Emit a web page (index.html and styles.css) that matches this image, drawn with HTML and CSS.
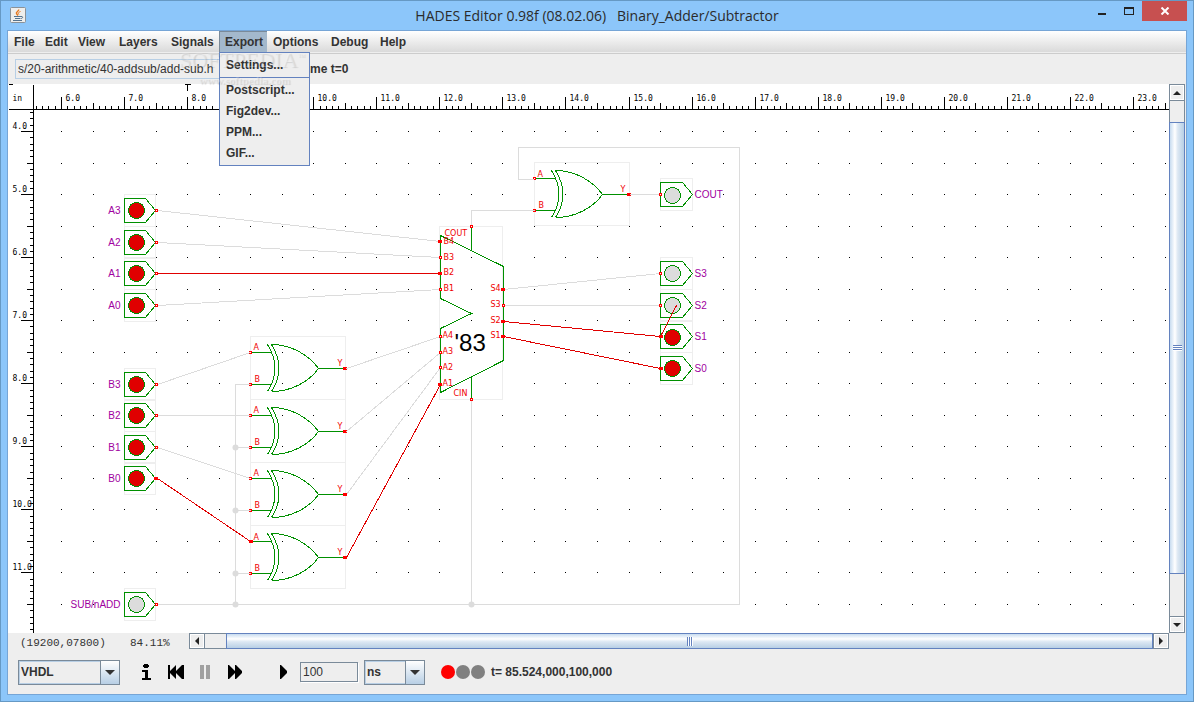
FILE: index.html
```html
<!DOCTYPE html>
<html lang="en">
<head>
<meta charset="utf-8">
<title>HADES Editor 0.98f (08.02.06) Binary_Adder/Subtractor</title>
<link rel="stylesheet" href="styles.css">
</head>
<body>
<div class="window">
  <header class="titlebar">
    <svg class="java-icon" width="16" height="16" viewBox="0 0 16 16" aria-hidden="true">
      <rect x="0.5" y="0.5" width="15" height="15" rx="1" fill="#eeeeec" stroke="#8a9299"/>
      <path d="M8.500 2.500C9.500 4 5.500 5 6.500 6.500L8 8.500" fill="none" stroke="#e8781e" stroke-width="1.500"/>
      <path d="M10.500 4.500C8 5.500 8 6 9 7.500" fill="none" stroke="#e8781e"/>
      <path d="M4 9.500H11M5 11.500H10.500M3 13.500H12M11 9.500C13.500 9 13 11.500 11 11.500" fill="none" stroke="#54738f"/>
    </svg>
    <h1 class="title">HADES Editor 0.98f (08.02.06) &nbsp; Binary_Adder/Subtractor</h1>
    <div class="window-buttons">
      <button class="win-btn" type="button" aria-label="Minimize"><svg width="10" height="10" viewBox="0 0 10 10"><path d="M1 8H9V10H1Z" fill="#222"/></svg></button>
      <button class="win-btn" type="button" aria-label="Maximize"><svg width="10" height="10" viewBox="0 0 10 10"><path d="M0 2H10V10H0ZM1 4V9H9V4Z" fill="#222" fill-rule="evenodd"/></svg></button>
      <button class="win-btn close" type="button" aria-label="Close"><svg width="10" height="8" viewBox="0 0 10 8"><path d="M1.500 0.500L8.500 7.500M8.500 0.500L1.500 7.500" stroke="#fff" stroke-width="2"/></svg></button>
    </div>
  </header>

  <main class="content">
    <nav class="menubar" aria-label="Main menu">
      <button type="button" class="menu">File</button>
      <button type="button" class="menu">Edit</button>
      <button type="button" class="menu">View</button>
      <button type="button" class="menu">Layers</button>
      <button type="button" class="menu">Signals</button>
      <div class="menu-holder">
        <button type="button" class="menu open" aria-expanded="true">Export</button>
        <div class="dropdown" role="menu">
          <button type="button" role="menuitem" class="item first">Settings...</button>
          <button type="button" role="menuitem" class="item">Postscript...</button>
          <button type="button" role="menuitem" class="item">Fig2dev...</button>
          <button type="button" role="menuitem" class="item">PPM...</button>
          <button type="button" role="menuitem" class="item">GIF...</button>
        </div>
      </div>
      <button type="button" class="menu">Options</button>
      <button type="button" class="menu">Debug</button>
      <button type="button" class="menu">Help</button>
      <div class="watermark"><span class="wm-name">SOFTPEDIA<sup class="wm-tm">™</sup></span><span class="wm-url">www.softpedia.com</span></div>
    </nav>

    <div class="toolbar">
      <input class="path" type="text" aria-label="Design path" value="s/20-arithmetic/40-addsub/add-sub.h">
      <span>me t=0</span>
    </div>

    <div class="editor">
      <svg class="canvas" id="canvas" role="img" aria-label="Binary adder and subtractor schematic">
        <defs>
          <g id="bulb-in">
            <rect class="bbox" x="124" y="-16" width="31" height="32"/>
            <path class="green" d="M124 -12H145L155 0L145 12H124Z"/>
          </g>
          <g id="bulb-out">
            <rect class="bbox" x="660" y="-16" width="32" height="32"/>
            <path class="green" d="M660 -12H682L692 0L682 12H660Z"/>
          </g>
          <rect id="port" class="port" x="-1" y="-1" width="2" height="2"/>
          <rect id="portf" class="port full" x="-2" y="-1" width="3" height="2"/>
          <g id="xor">
            <rect class="bbox" x="250" y="-32" width="95" height="63"/>
            <path class="green" d="M251 -16H271M251 16H271M267 -24Q282 0 267 23M271 -24Q286 0 271 23M271 -24C290 -24 308 -14 318 0C308 14 290 23 271 23M318 0H345"/>
            <use href="#port" x="250" y="-16"/><use href="#port" x="250" y="16"/><use href="#portf" x="345" y="0"/>
          </g>
        </defs>
        <g transform="translate(-7.500 -83.500)">
          <g id="grid"></g>
          <g id="ruler"></g>

          <g>
            <use href="#bulb-in" y="210"/><use href="#bulb-in" y="242"/><use href="#bulb-in" y="273"/><use href="#bulb-in" y="305"/>
            <use href="#bulb-in" y="384"/><use href="#bulb-in" y="415"/><use href="#bulb-in" y="447"/><use href="#bulb-in" y="478"/><use href="#bulb-in" y="604"/>
            <use href="#bulb-out" y="194"/><use href="#bulb-out" y="273"/><use href="#bulb-out" y="305"/><use href="#bulb-out" y="336"/><use href="#bulb-out" y="368"/>
          </g>
          <g class="on">
            <circle cx="136" cy="210" r="8"/><circle cx="136" cy="242" r="8"/><circle cx="136" cy="273" r="8"/><circle cx="136" cy="305" r="8"/>
            <circle cx="136" cy="384" r="8"/><circle cx="136" cy="415" r="8"/><circle cx="136" cy="447" r="8"/><circle cx="136" cy="478" r="8"/>
            <circle cx="672" cy="337" r="8"/><circle cx="672" cy="368" r="8"/>
          </g>
          <g class="off">
            <circle cx="136" cy="604" r="8"/><circle cx="672" cy="195" r="8"/><circle cx="672" cy="273" r="8"/><circle cx="672" cy="305" r="8"/>
          </g>

          <use href="#xor" y="368"/><use href="#xor" y="431"/><use href="#xor" y="494"/><use href="#xor" y="557"/>
          <use href="#xor" x="284" y="194"/>

          <rect class="bbox" x="439" y="226" width="63" height="173"/>
          <path class="green" d="M440 235L503 266V360L440 392V328L471 313L440 298ZM471 226V250M471 376V399"/>

          <g class="wire">
            <path d="M157 210L440 241M157 242L440 257M157 305L440 289M157 384L250 352M157 415H250M157 447L250 478"/>
            <path d="M346 368L440 336M346 431L440 352M346 494L440 367"/>
            <path d="M157 604H739V147H518V179H533M235 604V384H250M235 447H250M235 510H250M235 573H250M471 399V604"/>
            <path d="M471 226V210H534M629 194H660M503 289L660 273M503 305H660"/>
          </g>
          <g class="node">
            <circle cx="235" cy="447" r="3"/><circle cx="235" cy="510" r="3"/><circle cx="235" cy="573" r="3"/><circle cx="235" cy="604" r="3"/><circle cx="471" cy="604" r="3"/>
          </g>
          <path class="wire-on" d="M157 273H440M157 478L250 541M346 557L440 384M503 321L660 336L676 305M503 336L660 368"/>

          <g>
            <use href="#port" x="156" y="210"/><use href="#port" x="156" y="242"/><use href="#port" x="156" y="273"/><use href="#port" x="156" y="305"/>
            <use href="#port" x="156" y="384"/><use href="#port" x="156" y="415"/><use href="#port" x="156" y="447"/><use href="#portf" x="156" y="478"/><use href="#port" x="156" y="604"/>
            <use href="#port" x="660" y="194"/><use href="#port" x="660" y="273"/><use href="#port" x="660" y="305"/><use href="#portf" x="661" y="336"/><use href="#portf" x="661" y="368"/>
            <use href="#portf" x="440" y="241"/><use href="#port" x="440" y="257"/><use href="#portf" x="440" y="273"/><use href="#port" x="440" y="289"/>
            <use href="#port" x="440" y="336"/><use href="#port" x="440" y="352"/><use href="#port" x="440" y="367"/><use href="#portf" x="440" y="384"/>
            <use href="#portf" x="503" y="289"/><use href="#port" x="503" y="305"/><use href="#portf" x="503" y="321"/><use href="#portf" x="503" y="336"/>
            <use href="#port" x="471" y="226"/><use href="#port" x="471" y="399"/><use href="#portf" x="251" y="541"/>
          </g>

          <g class="name end">
            <text x="120" y="213">A3</text><text x="120" y="245">A2</text><text x="120" y="276">A1</text><text x="120" y="308">A0</text>
            <text x="120" y="387">B3</text><text x="120" y="418">B2</text><text x="120" y="450">B1</text><text x="120" y="481">B0</text>
            <text x="120" y="607">SUB/nADD</text>
          </g>
          <g class="name">
            <text x="694" y="197">COUT</text><text x="694" y="276">S3</text><text x="694" y="308">S2</text><text x="694" y="339">S1</text><text x="694" y="371">S0</text>
          </g>
          <g class="pin">
            <text x="253" y="349">A</text><text x="254" y="381">B</text><text x="337" y="365">Y</text>
            <text x="253" y="412">A</text><text x="254" y="444">B</text><text x="337" y="428">Y</text>
            <text x="253" y="475">A</text><text x="254" y="507">B</text><text x="337" y="491">Y</text>
            <text x="253" y="539">A</text><text x="254" y="570">B</text><text x="337" y="554">Y</text>
            <text x="537" y="176">A</text><text x="538" y="207">B</text><text x="620" y="191">Y</text>
            <text x="444" y="235">COUT</text><text x="453" y="395">CIN</text>
            <text x="443" y="243">B4</text><text x="443" y="259">B3</text><text x="443" y="274">B2</text><text x="443" y="290">B1</text>
            <text x="442" y="337">A4</text><text x="442" y="353">A3</text><text x="442" y="369">A2</text><text x="442" y="385">A1</text>
            <text x="490" y="290">S4</text><text x="490" y="306">S3</text><text x="490" y="322">S2</text><text x="490" y="337">S1</text>
          </g>
          <text class="chip" x="454" y="350">'83</text>
        </g>
      </svg>
      <div class="scroll vertical">
        <button type="button" class="sb-btn" aria-label="Scroll up"><svg width="8" height="4" viewBox="0 0 8 4"><path d="M4 0L8 4H0Z"/></svg></button>
        <div class="track"><div class="gap-before"></div><div class="thumb"><span class="grip"></span></div><div class="gap-after"></div></div>
        <button type="button" class="sb-btn" aria-label="Scroll down"><svg width="8" height="4" viewBox="0 0 8 4"><path d="M0 0H8L4 4Z"/></svg></button>
      </div>
    </div>

    <div class="status">
      <span class="coords">(19200,07800)</span>
      <span class="zoom">84.11%</span>
      <div class="scroll horizontal">
        <button type="button" class="sb-btn" aria-label="Scroll left"><svg width="4" height="8" viewBox="0 0 4 8"><path d="M4 0V8L0 4Z"/></svg></button>
        <div class="track"><div class="gap-before"></div><div class="thumb"><span class="grip"></span></div></div>
        <button type="button" class="sb-btn" aria-label="Scroll right"><svg width="4" height="8" viewBox="0 0 4 8"><path d="M0 0L4 4L0 8Z"/></svg></button>
      </div>
    </div>

    <div class="controls">
      <div class="combo language">
        <select aria-label="Language"><option>VHDL</option></select>
        <span class="arrow"><svg width="10" height="5" viewBox="0 0 10 5"><path d="M0 0H10L5 5Z"/></svg></span>
      </div>
      <div class="player">
        <button type="button" aria-label="Info"><svg width="16" height="16" viewBox="0 0 16 16"><path d="M6 0H10V1H11V3H10V4H6V3H5V1H6ZM4 6H10V14H13V16H4V14H7V8H4Z"/></svg></button>
        <button type="button" aria-label="Rewind"><svg width="16" height="16" viewBox="0 0 16 16"><path d="M0 1H2V7L8 1V7L14 1H16V15H14L8 9V15L2 9V15H0Z"/></svg></button>
        <button type="button" aria-label="Pause" disabled><svg width="16" height="16" viewBox="0 0 16 16"><path d="M2 1H6V15H2ZM8 1H12V15H8Z"/></svg></button>
        <button type="button" aria-label="Run"><svg width="16" height="16" viewBox="0 0 16 16"><path d="M0 1H1L7 7V1H8L14 7V9L8 15H7V9L1 15H0Z"/></svg></button>
      </div>
      <button type="button" class="step" aria-label="Step"><svg width="8" height="14" viewBox="0 0 8 14"><path d="M0 0H1L7 6V8L1 14H0Z"/></svg></button>
      <input class="amount" type="text" aria-label="Step time" value="100">
      <div class="combo unit">
        <select aria-label="Time unit"><option>ns</option></select>
        <span class="arrow"><svg width="10" height="5" viewBox="0 0 10 5"><path d="M0 0H10L5 5Z"/></svg></span>
      </div>
      <svg class="lamps" width="44" height="14" viewBox="0 0 44 14" aria-hidden="true"><circle cx="7" cy="7" r="7" fill="#f00"/><circle cx="22" cy="7" r="7" fill="#808080"/><circle cx="37" cy="7" r="7" fill="#808080"/></svg>
      <output class="time">t= 85.524,000,100,000</output>
    </div>
  </main>
</div>
<script src="ruler.js"></script>
</body>
</html>
```
FILE: styles.css
```css
* { box-sizing: border-box; }
body { margin: 0; font: bold 12px/16px "Liberation Sans", Arial, sans-serif; color: #333; }
button { border: 0; padding: 0; margin: 0; background: none; font: inherit; color: inherit; }
input, select { font: inherit; color: inherit; margin: 0; border-radius: 0; }
svg { display: block; }

.window {
  display: flex; flex-direction: column; height: 100vh; padding: 0 6px 6px;
  background: #8cc6fa; border: 1px solid #6699c4;
}
.titlebar { display: grid; grid-template-columns: 1fr auto 1fr; height: 29px; flex: none; }
.java-icon { margin: 6px 0 0 3px; }
.title { margin: 0; font: 14px/30px "Open Sans", "Noto Sans", sans-serif; color: #2b2b2b; white-space: nowrap; }
.window-buttons { display: flex; justify-content: flex-end; align-items: flex-start; }
.win-btn { width: 27px; height: 20px; padding-top: 4px; display: flex; justify-content: center; }
.win-btn.close { width: 45px; padding: 0; align-items: center; background: #c75050; }

.content { flex: 1; min-height: 0; display: flex; flex-direction: column; background: #eee; border: 1px solid #76a5d6; }
.menubar {
  position: relative; display: grid; flex: none; height: 23px; align-items: stretch;
  grid-template-columns: 31px 33px 41px 52px 54px 48px 58px 49px 49px;
  background: linear-gradient(#fff, #dadada) 0 0 / 100% 21px no-repeat #eee; border-bottom: 1px solid #ccc;
}
.menu { height: 22px; padding-left: 6px; text-align: left; }
.menu-holder { position: relative; }
.menu.open { width: 100%; background: #a3b8cc; box-shadow: inset 1px 1px 0 #7a8a99; }
.dropdown {
  position: absolute; z-index: 2; top: 21px; left: 0; width: 91px;
  display: flex; flex-direction: column; background: #eee; border: 1px solid #6382bf;
}
.item { height: 21px; padding: 0 0 1px 6px; text-align: left; }
.item.first { height: 25px; border-bottom: 1px solid #6382bf; margin-bottom: 2px; }
.item:last-child { height: 22px; padding-bottom: 2px; }
.watermark { position: absolute; z-index: 3; left: 171px; top: 17px; pointer-events: none; color: rgba(255,255,255,.25); text-shadow: 1px 1px 1px rgba(0,0,0,.12); }
.wm-name { display: block; font: 22px/24px "Liberation Serif", serif; white-space: nowrap; }
.wm-tm { font-size: 8px; line-height: 8px; }
.wm-url { display: block; padding-left: 20px; font: bold 11px/16px "Liberation Serif", serif; }

.toolbar { display: flex; align-items: center; gap: 5px; flex: none; height: 30px; padding-left: 7px; }
.path { width: 290px; height: 20px; padding: 0 2px; background: #eee; border: 1px solid #b8cfe5; font-weight: normal; }

.editor { flex: 1; min-height: 0; display: flex; }
.canvas { flex: 1; min-width: 0; height: 100%; background: #fff; shape-rendering: crispEdges; }
.canvas text { font-weight: normal; font-size: 10px; }
.canvas .bbox { fill: none; stroke: #eee; }
.canvas .green { fill: none; stroke: #009000; }
.canvas .port { fill: #fff; stroke: #f00; }
.canvas .full { fill: #f00; }
.on circle { fill: #e00000; stroke: #009000; }
.off circle { fill: #dcdcdc; stroke: #009000; }
.wire { fill: none; stroke: #dcdcdc; }
.node { fill: #dcdcdc; shape-rendering: geometricPrecision; }
.wire-on { fill: none; stroke: #e00000; }
.name { fill: #a000a0; }
.end { text-anchor: end; }
.canvas .pin text { font-family: "DejaVu Sans", sans-serif; font-size: 8px; fill: #f00000; }
.canvas .chip { font-size: 24px; fill: #000; }
.canvas #ruler text { font: 8px "DejaVu Sans Mono", monospace; fill: #000; }
.ruler-line { fill: none; stroke: #000; }
.dots { fill: none; stroke: #000; }

.scroll { display: flex; flex: none; background: #eee; border: 1px solid #7a8a99; }
.scroll path { fill: #222; }
.track { flex: 1; display: flex; min-width: 0; min-height: 0; }
.sb-btn { flex: none; display: flex; align-items: center; justify-content: center; border: 1px solid #fff; }
.thumb { display: flex; align-items: center; justify-content: center; border: 1px solid #6382bf; }
.vertical { width: 16px; margin-right: 1px; flex-direction: column; }
.vertical .track { flex-direction: column; border: 1px solid #7a8a99; border-width: 1px 0; }
.vertical .sb-btn { height: 15px; }
.vertical .gap-before { flex: 21; }
.vertical .thumb { flex: 451; margin: 0 -1px; background: linear-gradient(90deg, #c8dcf0, #fff 35%, #dde8f3 55%, #b8cfe5); }
.vertical .gap-after { flex: 42; }
.vertical .grip { width: 9px; height: 6px; background: repeating-linear-gradient(#6382bf 0 1px, #fff 1px 2px); }
.horizontal { flex: 1; height: 16px; flex-direction: row; }
.horizontal .track { border: 1px solid #7a8a99; border-width: 0 1px; }
.horizontal .sb-btn { width: 14px; }
.horizontal .gap-before { flex: 21; }
.horizontal .thumb { flex: 925; margin: -1px 0; background: linear-gradient(#c8dcf0, #fff 35%, #dde8f3 55%, #b8cfe5); }
.horizontal .grip { width: 6px; height: 9px; background: repeating-linear-gradient(90deg, #6382bf 0 1px, #fff 1px 2px); }

.status { display: flex; flex: none; height: 17px; padding-right: 17px; font: 11px/20px "Liberation Mono", monospace; }
.coords { width: 122px; padding-left: 12px; }
.zoom { width: 59px; }

.controls { display: flex; align-items: center; flex: none; height: 44px; padding: 0 10px; }
.combo { position: relative; height: 25px; }
.combo select { width: 100%; height: 100%; padding: 0 2px; appearance: none; background: #eee; border: 1px solid #7a8a99; box-shadow: inset 0 0 0 1px #b8cfe5; }
.arrow {
  position: absolute; top: 1px; right: 1px; bottom: 1px; width: 19px; display: flex; align-items: center; justify-content: center;
  border-left: 1px solid #7a8a99; background: linear-gradient(#fff, #b8cfe5); pointer-events: none;
}
.arrow path { fill: #333; }
.language { width: 102px; }
.unit { width: 61px; margin-left: 6px; }
.player { display: flex; gap: 14px; margin-left: 18px; }
.player [disabled] path { fill: #a0a0a0; }
.step { margin-left: 36px; }
.amount { width: 58px; height: 20px; margin-left: 12px; padding: 0 2px; background: #eee; border: 1px solid #7a8a99; font-weight: normal; box-shadow: 1px 1px 0 #fff; }
.lamps { margin-left: 16px; }
.time { margin-left: 6px; }
```
FILE: ruler.js
```js
(function () {
  var NS = "http://www.w3.org/2000/svg";
  var UNIT = 63.06;
  var canvas = document.getElementById("canvas");
  var ruler = document.getElementById("ruler");
  var right = canvas.clientWidth + 8, bottom = canvas.clientHeight + 84;
  var ticks = "M8 109H" + (right - 1) + "M33 84V" + bottom + "M8 84H12M184 84H190M187 84V90";

  function path(parent, cls, d) {
    var p = document.createElementNS(NS, "path");
    p.setAttribute("class", cls);
    p.setAttribute("d", d);
    parent.appendChild(p);
  }
  function label(x, y, text) {
    var t = document.createElementNS(NS, "text");
    t.setAttribute("x", x);
    t.setAttribute("y", y);
    t.textContent = text;
    ruler.appendChild(t);
  }
  function xAt(n) { return Math.round(61 + (n / 10 - 6) * UNIT); }
  function yAt(n) { return Math.round(131 + (n / 10 - 4) * UNIT); }

  var n, x, y, m;
  for (n = 56; xAt(n) < right - 1; n++) {
    x = xAt(n);
    ticks += "M" + x + " 109V" + (n % 10 === 0 ? 96 : n % 5 === 0 ? 102 : 105);
    if (n % 10 === 0 && x + 20 < right) label(x + 4, 100, n / 10 + ".0");
  }
  for (n = 37; yAt(n) < bottom - 1; n++) {
    y = yAt(n);
    ticks += "M33 " + y + "H" + (n % 10 === 0 ? 20 : n % 5 === 0 ? 26 : 29);
    if (n % 10 === 0) label(12, y - 3, n / 10 + ".0");
  }
  label(12, 100, "in");
  path(ruler, "ruler-line", ticks);

  var dots = "";
  for (n = 60; xAt(n) < right - 1; n += 5)
    for (m = 40; yAt(m) < bottom - 1; m += 5)
      dots += "M" + (xAt(n) - 0.5) + " " + yAt(m) + "h1";
  path(document.getElementById("grid"), "dots", dots);
})();
```
